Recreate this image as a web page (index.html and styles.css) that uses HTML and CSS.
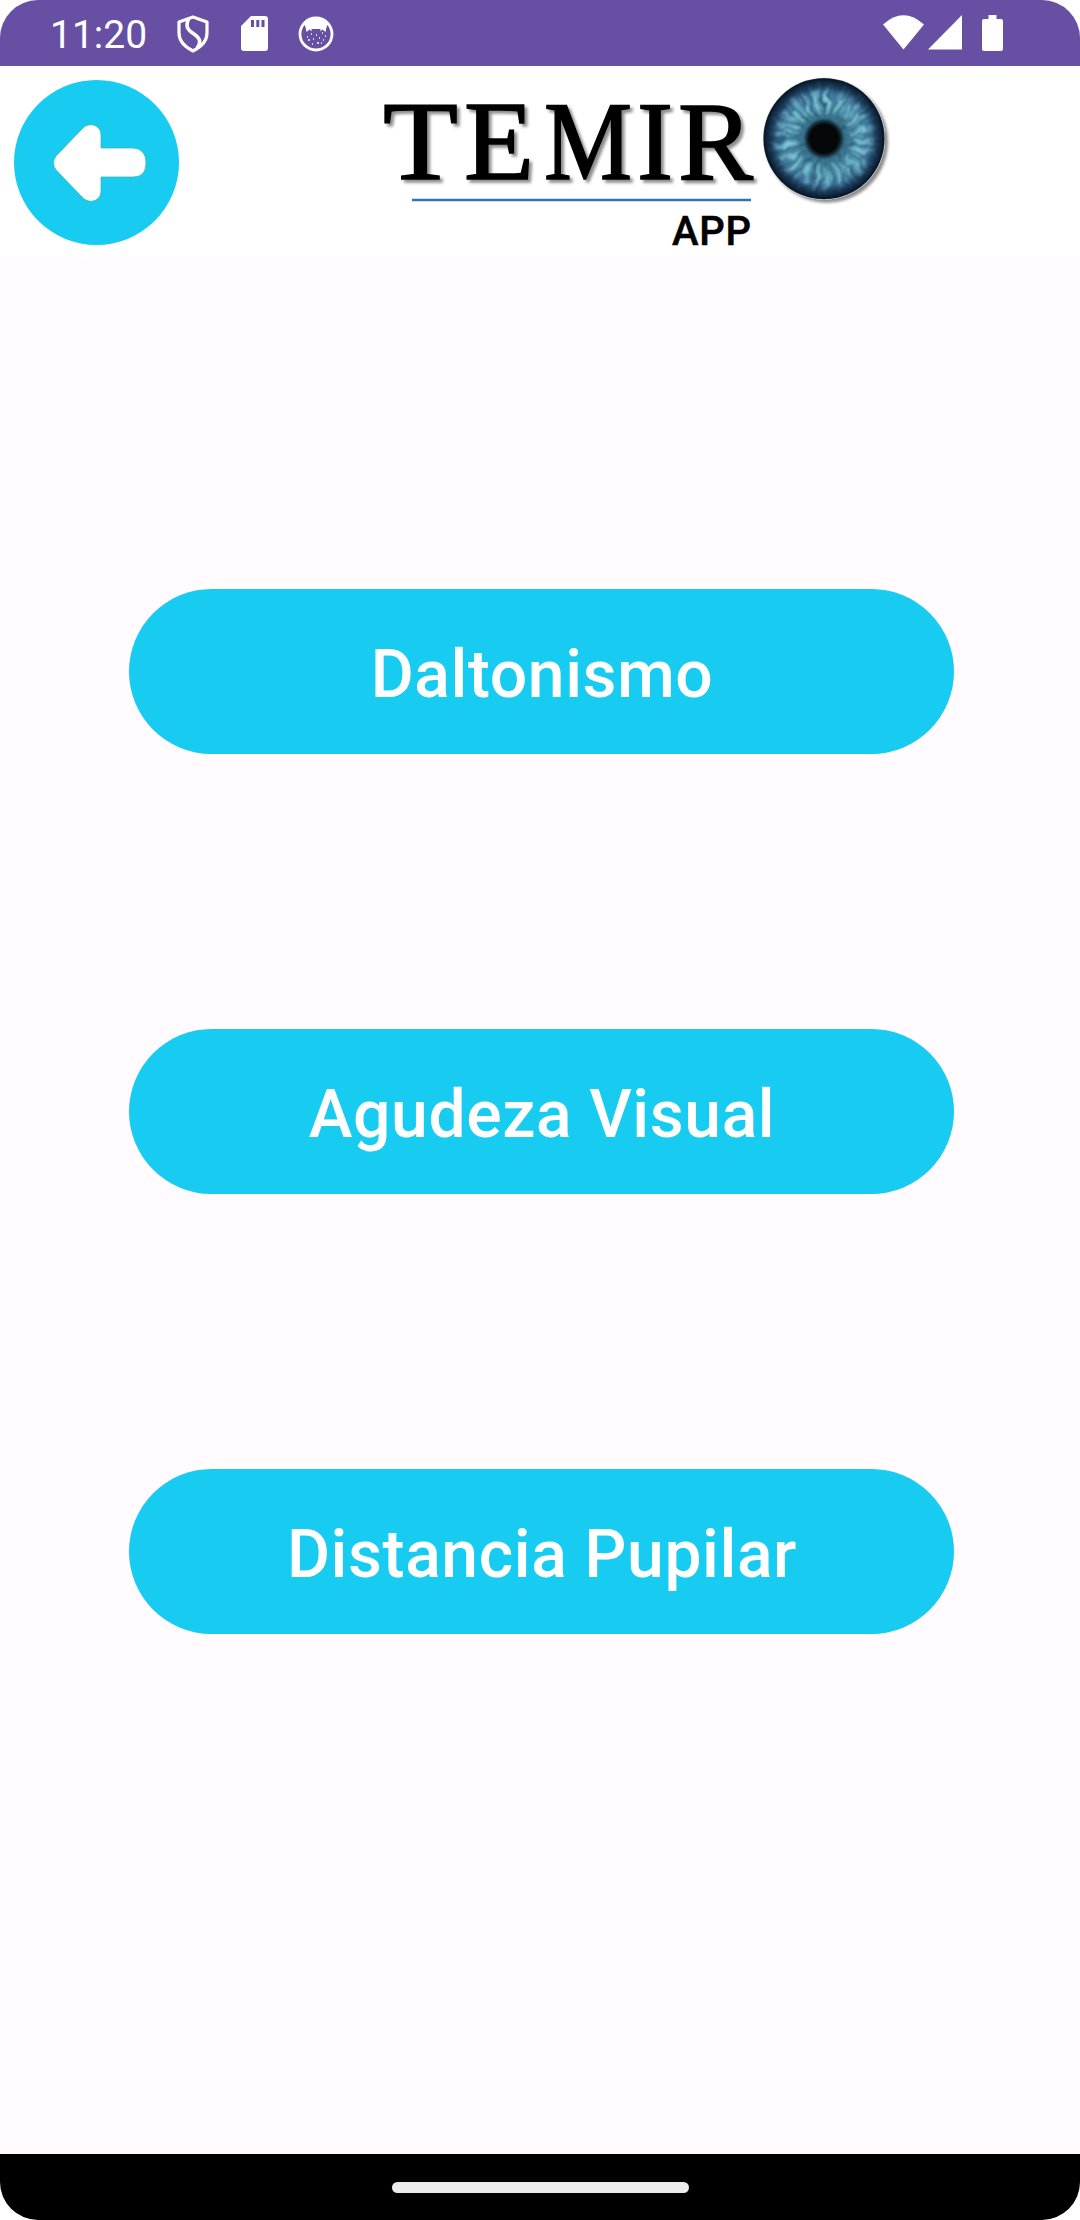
FILE: index.html
```html
<!DOCTYPE html>
<html lang="es">
<head>
<meta charset="utf-8">
<title>Temiro App</title>
<link rel="stylesheet" href="styles.css">
</head>
<body>
<div class="screen">
  <div class="status">
    <span class="time">11:20</span>
    <svg class="ic-shield" width="32" height="38" viewBox="0 0 32 38"><path d="M16 2 30 7V18C30 26 24 32 16 36C8 32 2 26 2 18V7Z" fill="none" stroke="#fff" stroke-width="3.2" stroke-linejoin="round"/><path d="M11.500 4C8 12 11 15 17 19C24 24 24 28 20 33" fill="none" stroke="#fff" stroke-width="3.6"/></svg>
    <svg class="ic-sd" width="27" height="35" viewBox="0 0 27 35"><path fill="#fff" fill-rule="evenodd" d="M10 0H24Q27 0 27 3V32Q27 35 24 35H3Q0 35 0 32V10ZM10 4V11H13V4ZM15.300 4V11H18.300V4ZM20.500 4V11H23.500V4Z"/></svg>
    <svg class="ic-cat" width="36" height="36" viewBox="0 0 36 36"><circle cx="18" cy="18" r="16" fill="none" stroke="#fff" stroke-width="2.800"/><path fill="#fff" d="M6 8Q10 2 18 2T30 8L28.500 11L27.500 16L24.500 13.500L22.500 15.500V13H13.500V15.500L11.500 13.500L8.500 16L7.500 11Z"/><path d="M9 21h1M13 18h1M18 19h1M24 17h1M27 20h1M10 24h2M15 23h1M21 22h1M25 24h1M14 28h1M19 27h2M23 27h1" stroke="#fff" stroke-width="1.500"/></svg>
    <svg class="ic-net" width="122" height="38" viewBox="0 0 122 38" fill="#fff"><path d="M0 9.500Q20.500-9 41 9.500L20.500 34.500Z"/><path d="M45 34.500H79V0Z"/><path d="M105.500 0H113.500V4H118Q120 4 120 6V34Q120 36 118 36H101Q99 36 99 34V6Q99 4 101 4H105.500Z"/></svg>
  </div>
  <header class="header">
    <button class="back" aria-label="Volver"><svg width="94" height="78" viewBox="0 0 94 78"><path d="M31 3Q37-1 43 2Q48 5 48 11V24H80Q93 25 93 39T80 53H48V67Q48 73 43 76Q37 79 31 75L3 46Q-2 39 3 32Z" fill="#fff" stroke="#35b5a5" stroke-width=".7"/></svg></button>
    <svg class="logo" width="520" height="186" viewBox="376 72 520 186">
      <defs>
        <radialGradient id="iris"><stop offset=".24" stop-color="#16303f"/><stop offset=".36" stop-color="#3f7d98"/><stop offset=".6" stop-color="#4489a8"/><stop offset=".8" stop-color="#376a90"/><stop offset=".94" stop-color="#173a58"/><stop offset="1" stop-color="#0a1826"/></radialGradient>
        <radialGradient id="rim"><stop offset=".76" stop-color="#0c2036" stop-opacity="0"/><stop offset=".94" stop-color="#0c2036" stop-opacity=".7"/><stop offset="1" stop-color="#081520"/></radialGradient>
        <radialGradient id="pupil"><stop offset=".7" stop-color="#050708"/><stop offset="1" stop-color="#07131b" stop-opacity="0"/></radialGradient>
        <filter id="fiber" x="-20%" y="-20%" width="140%" height="140%"><feTurbulence type="fractalNoise" baseFrequency=".07" numOctaves="2" seed="4"/><feDisplacementMap in="SourceGraphic" scale="13" xChannelSelector="R" yChannelSelector="G"/><feGaussianBlur stdDeviation=".8"/></filter>
        <filter id="shade" x="-20%" y="-20%" width="140%" height="150%"><feDropShadow dx="3" dy="3" stdDeviation="1.500" flood-color="#000" flood-opacity=".45"/></filter>
        <clipPath id="disc"><circle cx="824" cy="138.700" r="60"/></clipPath>
      </defs>
      <text class="brand" y="178.500" filter="url(#shade)"><tspan x="383" textLength="75" lengthAdjust="spacingAndGlyphs">T</tspan><tspan x="464" textLength="70" lengthAdjust="spacingAndGlyphs">E</tspan><tspan x="544" textLength="88" lengthAdjust="spacingAndGlyphs">M</tspan><tspan x="637" textLength="36" lengthAdjust="spacingAndGlyphs">I</tspan><tspan x="678" textLength="75" lengthAdjust="spacingAndGlyphs">R</tspan></text>
      <path d="M412 200H751" stroke="#3173b5" stroke-width="2.600"/>
      <text class="sub" x="672" y="245" textLength="79">APP</text>
      <circle cx="824" cy="138.700" r="61" fill="#b9c3cc" filter="url(#shade)"/>
      <circle cx="824" cy="138.700" r="60" fill="url(#iris)"/>
      <g clip-path="url(#disc)"><g filter="url(#fiber)" fill="none">
        <circle cx="825" cy="139.700" r="41" stroke="#8ad6e8" stroke-opacity=".5" stroke-width="20" stroke-dasharray="4 5 2 7 5 6 3 9"/>
        <circle cx="825" cy="139.700" r="48" stroke="#223f63" stroke-opacity=".45" stroke-width="18" stroke-dasharray="3 6 2 8 4 7"/>
        <circle cx="825" cy="139.700" r="29" stroke="#20394c" stroke-opacity=".55" stroke-width="24" stroke-dasharray="1 3 2 4"/>
        <circle cx="825" cy="139.700" r="35" stroke="#a3edf5" stroke-opacity=".6" stroke-width="16" stroke-dasharray="2 8 3 10 2 6"/>
        <circle cx="825" cy="139.700" r="44" stroke="#7cc4dc" stroke-opacity=".4" stroke-width="24" stroke-dasharray="1 4 1 7"/>
      </g></g>
      <circle cx="824" cy="138.700" r="60.500" fill="url(#rim)"/>
      <circle cx="824" cy="138.700" r="20" fill="url(#pupil)"/>
    </svg>
  </header>
  <main class="menu">
    <button class="item">Daltonismo</button>
    <button class="item">Agudeza Visual</button>
    <button class="item">Distancia Pupilar</button>
  </main>
  <footer class="nav"><div class="handle"></div></footer>
</div>
</body>
</html>
```
FILE: styles.css
```css
body { margin: 0; background: #fff; font-family: Roboto, sans-serif; }
.screen { width: 1080px; height: 2220px; display: flex; flex-direction: column; background: #fffbff; border-radius: 38px; overflow: hidden; }
button { border: 0; padding: 0; font-family: inherit; }
.status { height: 66px; background: #6750a3; display: flex; align-items: center; color: #fff; flex: none; }
.time { font-size: 39px; margin-left: 50px; width: 127px; padding-top: 3px; }
.ic-shield { margin-top: 1px; }
.ic-sd { margin-left: 32px; }
.ic-cat { margin-left: 30px; margin-top: 1px; }
.ic-net { margin-left: auto; margin-right: 75px; margin-top: 1px; }
.header { height: 192px; flex: none; background: #fff; display: flex; }
.back { width: 165px; height: 165px; margin: 14px 0 0 14px; border-radius: 50%; background: #18cbf1; display: flex; align-items: center; padding-left: 39px; box-sizing: border-box; }
.back svg { flex: none; }
.logo { margin: 6px 0 0 197px; overflow: visible; }
.brand { font: 112px "Liberation Serif", serif; stroke: #000; stroke-width: 1.6px; }
.sub { font: 500 40px Roboto, sans-serif; stroke: #000; stroke-width: .5px; }
.menu { flex: 1; display: flex; flex-direction: column; gap: 275px; padding: 331px 0 0 129px; }
.item { width: 825px; height: 165px; border-radius: 82.5px; background: #18cbf1; color: #fff; font-size: 66px; font-weight: 500; letter-spacing: .6px; padding: 5px 0 0 1px; }
.nav { height: 66px; flex: none; background: #000; display: flex; align-items: center; justify-content: center; }
.handle { width: 297px; height: 11px; border-radius: 6px; background: #ececec; }
```
